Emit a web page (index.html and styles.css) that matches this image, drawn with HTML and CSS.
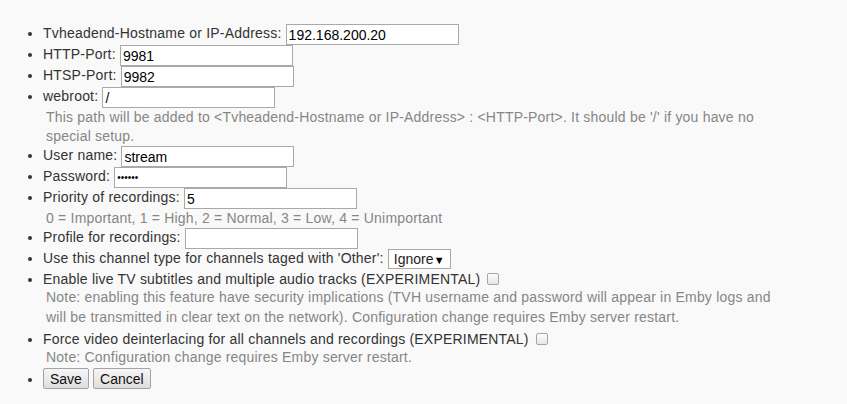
FILE: index.html
```html
<!DOCTYPE html>
<html lang="en">
<head>
<meta charset="UTF-8">
<meta name="viewport" content="width=device-width, initial-scale=1.0">
<title>Tvheadend settings</title>
<link rel="stylesheet" href="styles.css">
</head>
<body>
  <ul class="settings">
    <li>Tvheadend-Hostname or IP-Address: <input type="text" value="192.168.200.20"></li>
    <li>HTTP-Port: <input type="text" value="9981"></li>
    <li>HTSP-Port: <input type="text" value="9982"></li>
    <li>webroot: <input type="text" value="/">
      <div class="help">This path will be added to &lt;Tvheadend-Hostname or IP-Address&gt; : &lt;HTTP-Port&gt;. It should be '/' if you have no special setup.</div>
    </li>
    <li>User name: <input type="text" value="stream"></li>
    <li>Password: <input type="password" value="secret"></li>
    <li>Priority of recordings: <input type="text" value="5">
      <div class="help">0 = Important, 1 = High, 2 = Normal, 3 = Low, 4 = Unimportant</div>
    </li>
    <li>Profile for recordings: <input type="text" value=""></li>
    <li>Use this channel type for channels taged with 'Other': <span class="select-wrap"><select>
        <option>Ignore</option>
        <option>TV</option>
        <option>Radio</option>
      </select></span></li>
    <li class="check-row">Enable live TV subtitles and multiple audio tracks (EXPERIMENTAL) <input type="checkbox">
      <div class="help">Note: enabling this feature have security implications (TVH username and password will appear in Emby logs and will be transmitted in clear text on the network). Configuration change requires Emby server restart.</div>
    </li>
    <li class="check-row">Force video deinterlacing for all channels and recordings (EXPERIMENTAL) <input type="checkbox">
      <div class="help">Note: Configuration change requires Emby server restart.</div>
    </li>
    <li class="buttons"><button>Save</button> <button>Cancel</button></li>
  </ul>
</body>
</html>
```

FILE: styles.css
```css
body {
  margin: 8px;
  background: #f9f9f9;
  color: #333;
  font-family: "Liberation Sans", Arial, sans-serif;
  font-size: 14px;
}

.settings {
  margin: 16px 0;
  padding-left: 35px;
  line-height: 16px;
  letter-spacing: 0.2px;
}

.settings li {
  margin: 0;
}

.settings input[type="text"],
.settings input[type="password"] {
  box-sizing: border-box;
  width: 173px;
  height: 21px;
  margin: 0;
  padding: 1px 2px;
  border: 1px solid #a9a9a9;
  background: #fff;
  color: #000;
  font-family: "Liberation Sans", Arial, sans-serif;
  font-size: 14px;
  letter-spacing: 0;
  vertical-align: middle;
}

.settings input[type="password"] {
  font-size: 10px;
}

.help { /* grey explanation under a setting */
  color: #868686;
  padding-left: 3px;
  padding-right: 50px;
  line-height: 19px;
}

.check-row .help {
  line-height: 20px;
  padding-bottom: 1px;
}

.select-wrap {
  position: relative;
  display: inline-block;
  vertical-align: middle;
}

.select-wrap select {
  appearance: none;
  -webkit-appearance: none;
  box-sizing: border-box;
  height: 20px;
  width: 63px;
  margin: 0;
  padding: 0 0 0 5px;
  border: 1px solid #a9a9a9;
  background: #fff;
  color: #222;
  font-family: "Liberation Sans", Arial, sans-serif;
  font-size: 14px;
}

.select-wrap::after { /* arrow drawn over the select */
  content: "\25BC";
  position: absolute;
  right: 6px;
  top: 3px;
  font-size: 11px;
  color: #000;
  pointer-events: none;
}

.check-row {
  padding-top: 2px;
}

.check-row + .check-row {
  padding-top: 3px;
}

.check-row input[type="checkbox"] {
  appearance: none;
  -webkit-appearance: none;
  width: 12px;
  height: 12px;
  margin: 0 0 0 3px;
  border: 1px solid #a5a5a5;
  border-radius: 2px;
  background: linear-gradient(#fdfdfd, #e6e6e6);
  vertical-align: -1px;
}

.buttons button {
  box-sizing: border-box;
  height: 21px;
  margin: 0;
  padding: 0 6px;
  border: 1px solid #a3a3a3;
  border-radius: 2px;
  background: linear-gradient(#f6f6f6, #dedede);
  color: #111;
  font-family: "Liberation Sans", Arial, sans-serif;
  font-size: 14px;
  letter-spacing: 0;
}
```
